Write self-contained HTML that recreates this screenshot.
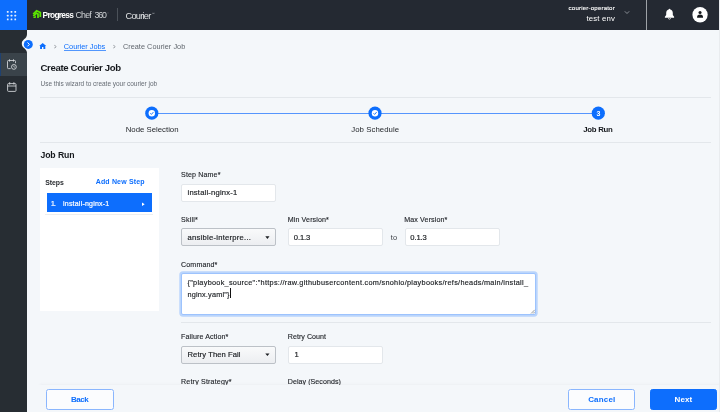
<!DOCTYPE html>
<html lang="en">
<head>
<meta charset="utf-8">
<title>Create Courier Job</title>
<style>
*{box-sizing:border-box;margin:0;padding:0}
html,body{width:720px;height:412px;overflow:hidden;background:#f4f7fa;font-family:"Liberation Sans",sans-serif;color:#1c1c1c}
#root{position:absolute;left:0;top:0;width:720px;height:412px;overflow:hidden;will-change:transform;background:#f4f7fa}
.abs{position:absolute}
#hdr{position:absolute;left:0;top:0;width:719px;height:30px;background:#242932}
#apps{position:absolute;left:0;top:0;width:27px;height:30px;background:#0d6efd}
#side{position:absolute;left:0;top:30px;width:27px;height:382px;background:#272d33}
#side .act{position:absolute;left:0;top:23px;width:27px;height:23px;background:#3a434a;border-left:1px solid #1f4170}
.t{position:absolute;white-space:nowrap;line-height:1}
.inp{position:absolute;background:#fff;border:1px solid #e3e7eb;border-radius:2px;height:18px;width:95px}
.sel{position:absolute;background:linear-gradient(#f9fafb,#eceef1);border:1px solid #bcc1c7;border-radius:2px;height:18px;width:95px}
.hr{position:absolute;height:1px;background:#e3e7eb}
.btn{position:absolute;appearance:none;-webkit-appearance:none;padding:0;margin:0;font:inherit;display:block;top:389px;width:67.3px;height:21px;border:1px solid #8ab6fe;border-radius:2.5px;background:#fbfcfe}
</style>
</head>
<body>
<div id="root">
<header id="hdr">
  <div id="apps">
    <svg class="abs" style="left:6px;top:11px" width="12" height="11" viewBox="0 0 12 11" fill="#e6efff"><g transform="translate(0.90 0.10) scale(1.0000 1.0000)"><rect x="0.00" y="0.00" width="1.7" height="1.7" rx="0.3"/><rect x="3.75" y="0.00" width="1.7" height="1.7" rx="0.3"/><rect x="7.50" y="0.00" width="1.7" height="1.7" rx="0.3"/><rect x="0.00" y="3.75" width="1.7" height="1.7" rx="0.3"/><rect x="3.75" y="3.75" width="1.7" height="1.7" rx="0.3"/><rect x="7.50" y="3.75" width="1.7" height="1.7" rx="0.3"/><rect x="0.00" y="7.50" width="1.7" height="1.7" rx="0.3"/><rect x="3.75" y="7.50" width="1.7" height="1.7" rx="0.3"/><rect x="7.50" y="7.50" width="1.7" height="1.7" rx="0.3"/></g></svg>
  </div>
  <!-- progress logo -->
  <svg class="abs" style="left:32px;top:9px" width="11" height="11" viewBox="0 0 11 11" fill="none" stroke="#5ce500" stroke-width="1.75" stroke-linejoin="miter"><g transform="translate(0.50 0.60) scale(1.0000 0.9574)"><path d="M0.7 4.7 L4.1 1.2 L7.8 3.1 L7.8 7.7"/><path d="M0.8 6.9 L3.9 3.7 L5.5 4.6 L5.5 8.8"/><path d="M0.4 8.9 L3.3 5.9 L3.3 8.9 Z" fill="#5ce500" stroke="none"/></g></svg>
  <div class="abs" style="left:117px;top:8px;width:1px;height:13px;background:#4b5159"></div>
  <svg class="abs" style="left:624px;top:10px" width="7" height="6" viewBox="0 0 7 6"><g transform="translate(0.00 0.50) scale(1.0000 1.0000)"><path d="M0.8 0.8 L3 3 L5.2 0.8" stroke="#9ca1a8" stroke-width="0.85" fill="none"/></g></svg>
  <div class="abs" style="left:646px;top:0;width:1px;height:30px;background:#9ea2a7"></div>
  <!-- bell -->
  <svg class="abs" style="left:664px;top:8px" width="12" height="14" viewBox="0 0 12 14"><g transform="translate(0.00 0.50) scale(1.0000 1.0000)"><path d="M5.5 0.3 C5 0.3 4.7 0.7 4.7 1.1 C3 1.5 2.2 2.9 2.2 4.5 L2.2 6.6 L0.9 8.3 L0.9 9.2 L10.1 9.2 L10.1 8.3 L8.8 6.6 L8.8 4.5 C8.8 2.9 8 1.5 6.3 1.1 C6.3 0.7 6 0.3 5.5 0.3 Z" fill="#fff"/><path d="M4.3 9.7 A1.25 1.25 0 0 0 6.7 9.7" fill="none" stroke="#fff" stroke-width="0.8"/></g></svg>
  <!-- avatar -->
  <svg class="abs" style="left:692px;top:7px" width="17" height="17" viewBox="0 0 17 17"><g transform="translate(0.30 0.00) scale(1.0000 1.0000)"><circle cx="7.75" cy="7.75" r="7.65" fill="#fff"/><circle cx="7.75" cy="5.45" r="1.55" fill="#15181c"/><path d="M4.8 10.7 L4.8 9.9 C4.8 8.2 6 7.4 7.75 7.4 C9.5 7.4 10.7 8.2 10.7 9.9 L10.7 10.7 Z" fill="#15181c"/></g></svg>
</header>
<nav id="side">
  <div class="act"></div>
  <svg class="abs" style="left:7px;top:29px" width="11" height="12" viewBox="0 0 11 12" fill="none" stroke="#d9dcdf" stroke-width="0.85"><g transform="translate(0.00 0.00) scale(1.0000 1.0000)"><path d="M3.6 9.6 L1.4 9.6 A0.9 0.9 0 0 1 0.5 8.7 L0.5 2.4 A0.9 0.9 0 0 1 1.4 1.5 L7.6 1.5 A0.9 0.9 0 0 1 8.5 2.4 L8.5 4.2"/><path d="M2.5 0.3 L2.5 2.6 M6.5 0.3 L6.5 2.6"/><circle cx="6.9" cy="7.9" r="2.4"/><path d="M6.9 6.7 L6.9 8 L7.7 8.4" stroke-width="0.7"/></g></svg>
  <svg class="abs" style="left:7px;top:52px" width="11" height="11" viewBox="0 0 11 11" fill="none" stroke="#d9dcdf" stroke-width="0.85"><g transform="translate(0.00 0.00) scale(1.0000 1.0000)"><rect x="0.6" y="1.6" width="8.4" height="7.8" rx="0.9"/><path d="M0.6 4 L9 4 M2.7 0.2 L2.7 2.6 M6.9 0.2 L6.9 2.6"/></g></svg>
</nav>
<!-- sidebar toggle notch + button -->
<svg class="abs" style="left:20px;top:34px" width="9" height="21" viewBox="0 0 9 21"><g transform="translate(0.00 0.00) scale(1.0000 1.0000)"><path d="M8 0.3 L7 0.3 C7 5.2 1.8 5 1.8 9.7 C1.8 14.4 7 14.2 7 19 L8 19 Z" fill="#f4f7fa"/></g></svg>
<svg class="abs" style="left:23px;top:39px" width="11" height="11" viewBox="0 0 11 11"><g transform="translate(0.80 0.90) scale(1.0000 1.0000)"><circle cx="4.5" cy="4.5" r="4.5" fill="#0d6efd"/><path d="M3.7 2.6 L5.6 4.5 L3.7 6.4" stroke="#fff" stroke-width="1" fill="none"/></g></svg>
<div class="abs" style="left:63.8px;top:49.6px;width:41.8px;height:0.7px;background:#0d6efd;opacity:0.7"></div>

<!-- breadcrumb home -->
<svg class="abs" style="left:39px;top:42px" width="9" height="9" viewBox="0 0 9 9"><g transform="translate(0.20 0.70) scale(1.0000 0.9697)"><path d="M3.5 0.2 L0 3.4 L0.9 3.4 L0.9 6.5 L2.8 6.5 L2.8 4.4 L4.2 4.4 L4.2 6.5 L6.1 6.5 L6.1 3.4 L7 3.4 Z" fill="#0d6efd"/></g></svg>

<div class="hr" style="left:40px;top:97.3px;width:671px"></div>

<!-- stepper -->
<div class="abs" style="left:152px;top:112.9px;width:446px;height:1px;background:#5595fd"></div>
<svg class="abs" style="left:145px;top:106px" width="15" height="15" viewBox="0 0 15 15"><g transform="translate(0.20 0.60) scale(1.0000 1.0000)"><circle cx="6.6" cy="6.6" r="6.6" fill="#0d6efd"/><circle cx="6.6" cy="6.6" r="3.2" fill="#fff"/><path d="M5.1 6.699999999999999 L6.199999999999999 7.8 L8.2 5.5" stroke="#0d6efd" stroke-width="0.95" fill="none"/></g></svg>
<svg class="abs" style="left:368px;top:106px" width="15" height="15" viewBox="0 0 15 15"><g transform="translate(0.40 0.60) scale(1.0000 1.0000)"><circle cx="6.6" cy="6.6" r="6.6" fill="#0d6efd"/><circle cx="6.6" cy="6.6" r="3.2" fill="#fff"/><path d="M5.1 6.699999999999999 L6.199999999999999 7.8 L8.2 5.5" stroke="#0d6efd" stroke-width="0.95" fill="none"/></g></svg>
<svg class="abs" style="left:591px;top:106px" width="15" height="15" viewBox="0 0 15 15"><g transform="translate(0.70 0.60) scale(1.0000 1.0000)"><circle cx="6.6" cy="6.6" r="6.6" fill="#0d6efd"/></g></svg>
<div class="hr" style="left:40px;top:142px;width:671px"></div>

<!-- steps panel -->
<div class="abs" style="left:40px;top:168px;width:118.5px;height:142.5px;background:#fff"></div>
<div class="abs" style="left:46.5px;top:193px;width:105.5px;height:19.3px;background:#0d6efd"></div>
<div class="abs" style="left:45px;top:214px;width:108px;height:1px;background:#eceef0"></div>
<svg class="abs" style="left:141px;top:202px" width="5" height="6" viewBox="0 0 5 6"><g transform="translate(0.80 0.20) scale(1.0000 1.0000)"><path d="M0.2 0.2 L2.9 2 L0.2 3.8 Z" fill="#fff"/></g></svg>

<!-- form controls -->
<div class="inp" style="left:181.3px;top:183.6px"></div>
<div class="sel" style="left:181.3px;top:228.4px"></div>
<svg class="abs" style="left:265px;top:236px" width="6" height="4" viewBox="0 0 6 4"><g transform="translate(0.10 0.00) scale(0.9200 0.8824)"><path d="M0.2 0.2 L4.8 0.2 L2.5 3.3 Z" fill="#1c1f23"/></g></svg>
<div class="inp" style="left:288px;top:228.4px"></div>
<div class="inp" style="left:404.5px;top:228.4px"></div>

<div class="abs" style="left:181px;top:273px;width:355px;height:41.5px;border:1px solid #9dc3fd;border-radius:2px;background:#fff;box-shadow:0 0 0 1.7px #bad5fc"></div>
<div class="abs" style="left:230.4px;top:288.3px;width:0.9px;height:9.4px;background:#111"></div>
<svg class="abs" style="left:530px;top:309px" width="7" height="6" viewBox="0 0 7 6"><g transform="translate(0.60 0.40) scale(0.8800 0.8800)"><path d="M0.5 4.7 L4.7 0.5 M2.8 4.7 L4.7 2.8" stroke="#6d7278" stroke-width="0.8"/></g></svg>
<div class="hr" style="left:181px;top:322px;width:530px"></div>

<div class="sel" style="left:181.3px;top:345.6px"></div>
<svg class="abs" style="left:265px;top:353px" width="6" height="5" viewBox="0 0 6 5"><g transform="translate(0.10 0.20) scale(0.9200 0.8824)"><path d="M0.2 0.2 L4.8 0.2 L2.5 3.3 Z" fill="#1c1f23"/></g></svg>
<div class="inp" style="left:288px;top:345.6px"></div>

<div class="t" style="left:42.60px;top:10px;line-height:10px;font-size:8.4px;color:#fff;letter-spacing:-0.722px;font-weight:bold;">Progress</div>
<div class="t" style="left:74.40px;top:12px;line-height:3px;font-size:2.4px;color:#8d9299;letter-spacing:0.000px;">®</div>
<div class="t" style="left:75.60px;top:10px;line-height:10px;font-size:8.8px;color:#d0d3d6;letter-spacing:-0.846px;">Chef</div>
<div class="t" style="left:92.40px;top:11px;line-height:3px;font-size:2.4px;color:#8d9299;letter-spacing:0.000px;">®</div>
<div class="t" style="left:94.40px;top:10px;line-height:10px;font-size:8.8px;color:#d0d3d6;letter-spacing:-1.092px;">360</div>
<div class="t" style="left:107.20px;top:12px;line-height:3px;font-size:2.4px;color:#8d9299;letter-spacing:0.000px;">®</div>
<div class="t" style="left:125.60px;top:11px;line-height:10px;font-size:9.2px;color:#dfe1e3;letter-spacing:-0.744px;">Courier</div>
<div class="t" style="left:151.60px;top:12px;line-height:4px;font-size:3.4px;color:#a9adb3;letter-spacing:0.000px;">™</div>
<div class="t" style="left:568.60px;top:4px;line-height:7px;font-size:6.1px;color:#fff;letter-spacing:0.185px;-webkit-text-stroke:0.12px #fff">courier-operator</div>
<div class="t" style="left:586.40px;top:14px;line-height:9px;font-size:7.8px;color:#fff;letter-spacing:0.171px;">test env</div>
<div class="t" style="left:53.70px;top:43px;line-height:7px;font-size:6.8px;color:#656b72;letter-spacing:0.000px;transform:scaleX(0.62);transform-origin:0 50%">&gt;</div>
<a href="#" class="t" style="left:63.80px;top:42px;line-height:9px;font-size:7.4px;color:#0d6efd;letter-spacing:-0.037px;text-decoration:none;">Courier Jobs</a>
<div class="t" style="left:112.60px;top:43px;line-height:7px;font-size:6.8px;color:#656b72;letter-spacing:0.000px;transform:scaleX(0.62);transform-origin:0 50%">&gt;</div>
<div class="t" style="left:122.90px;top:42px;line-height:9px;font-size:7.3px;color:#60666d;letter-spacing:0.042px;">Create Courier Job</div>
<h1 class="t" style="left:40.40px;top:62px;line-height:11px;font-size:9.6px;color:#15181c;letter-spacing:-0.330px;font-weight:bold;margin:0;">Create Courier Job</h1>
<div class="t" style="left:40.50px;top:80px;line-height:7px;font-size:6.5px;color:#666c74;letter-spacing:-0.028px;">Use this wizard to create your courier job</div>
<div class="t" style="left:125.70px;top:125px;line-height:9px;font-size:7.8px;color:#1f2226;letter-spacing:-0.003px;">Node Selection</div>
<div class="t" style="left:351.30px;top:125px;line-height:9px;font-size:7.8px;color:#1f2226;letter-spacing:0.044px;">Job Schedule</div>
<div class="t" style="left:583.20px;top:125px;line-height:9px;font-size:7.8px;color:#15181c;letter-spacing:-0.270px;font-weight:bold;">Job Run</div>
<div class="t" style="left:596.40px;top:110px;line-height:7px;font-size:7px;color:#fff;letter-spacing:0.000px;font-weight:bold;">3</div>
<h2 class="t" style="left:40.40px;top:150px;line-height:10px;font-size:8.7px;color:#15181c;letter-spacing:-0.090px;font-weight:bold;margin:0;">Job Run</h2>
<div class="t" style="left:45.20px;top:179px;line-height:7px;font-size:6.9px;color:#2a2d31;letter-spacing:-0.033px;font-weight:bold;">Steps</div>
<div class="t" style="left:95.70px;top:178px;line-height:7px;font-size:7.0px;color:#0d6efd;letter-spacing:0.165px;font-weight:bold;">Add New Step</div>
<div class="t" style="left:51.00px;top:200px;line-height:7px;font-size:6.8px;color:#fff;letter-spacing:-0.780px;-webkit-text-stroke:0.2px #fff">1.</div>
<div class="t" style="left:63.00px;top:200px;line-height:7px;font-size:7.0px;color:#fff;letter-spacing:0.215px;-webkit-text-stroke:0.2px #fff">install-nginx-1</div>
<label class="t" style="left:181.05px;top:171px;line-height:8px;font-size:7.1px;color:#22252a;letter-spacing:0.129px;-webkit-text-stroke:0.12px #22252a">Step Name*</label>
<div class="t" style="left:187.50px;top:188px;line-height:9px;font-size:7.6px;color:#1a1d21;letter-spacing:0.205px;-webkit-text-stroke:0.18px #1a1d21">install-nginx-1</div>
<label class="t" style="left:181.05px;top:216px;line-height:8px;font-size:7.1px;color:#22252a;letter-spacing:0.189px;-webkit-text-stroke:0.12px #22252a">Skill*</label>
<div class="t" style="left:187.50px;top:233px;line-height:9px;font-size:7.6px;color:#1a1d21;letter-spacing:0.263px;-webkit-text-stroke:0.18px #1a1d21">ansible-interpre...</div>
<label class="t" style="left:287.75px;top:216px;line-height:8px;font-size:7.1px;color:#22252a;letter-spacing:0.117px;-webkit-text-stroke:0.12px #22252a">Min Version*</label>
<div class="t" style="left:293.80px;top:233px;line-height:9px;font-size:7.6px;color:#1a1d21;letter-spacing:-0.092px;-webkit-text-stroke:0.18px #1a1d21">0.1.3</div>
<div class="t" style="left:390.70px;top:233px;line-height:9px;font-size:7.4px;color:#3a3f45;letter-spacing:0.347px;">to</div>
<label class="t" style="left:404.25px;top:216px;line-height:8px;font-size:7.1px;color:#22252a;letter-spacing:0.120px;-webkit-text-stroke:0.12px #22252a">Max Version*</label>
<div class="t" style="left:410.30px;top:233px;line-height:9px;font-size:7.6px;color:#1a1d21;letter-spacing:-0.092px;-webkit-text-stroke:0.18px #1a1d21">0.1.3</div>
<label class="t" style="left:181.05px;top:261px;line-height:8px;font-size:7.1px;color:#22252a;letter-spacing:0.118px;-webkit-text-stroke:0.12px #22252a">Command*</label>
<div class="t" style="left:187.50px;top:278px;line-height:9px;font-size:7.3px;color:#1a1d21;letter-spacing:0.286px;-webkit-text-stroke:0.15px #1a1d21">{"playbook_source":"https://raw.githubusercontent.com/snohio/playbooks/refs/heads/main/install_</div>
<div class="t" style="left:187.50px;top:290px;line-height:9px;font-size:7.3px;color:#1a1d21;letter-spacing:0.185px;-webkit-text-stroke:0.15px #1a1d21">nginx.yaml"}</div>
<label class="t" style="left:181.05px;top:333px;line-height:8px;font-size:7.1px;color:#22252a;letter-spacing:0.113px;-webkit-text-stroke:0.12px #22252a">Failure Action*</label>
<div class="t" style="left:187.50px;top:350px;line-height:9px;font-size:7.6px;color:#1a1d21;letter-spacing:0.091px;-webkit-text-stroke:0.18px #1a1d21">Retry Then Fail</div>
<label class="t" style="left:287.75px;top:333px;line-height:8px;font-size:7.1px;color:#22252a;letter-spacing:0.037px;-webkit-text-stroke:0.12px #22252a">Retry Count</label>
<div class="t" style="left:294.50px;top:350px;line-height:9px;font-size:7.6px;color:#1a1d21;letter-spacing:0.000px;-webkit-text-stroke:0.18px #1a1d21">1</div>
<label class="t" style="left:181.05px;top:378px;line-height:8px;font-size:7.1px;color:#22252a;letter-spacing:0.172px;-webkit-text-stroke:0.12px #22252a">Retry Strategy*</label>
<label class="t" style="left:287.75px;top:378px;line-height:8px;font-size:7.1px;color:#22252a;letter-spacing:0.048px;-webkit-text-stroke:0.12px #22252a">Delay (Seconds)</label>

<!-- footer -->
<div class="abs" style="left:40px;top:385px;width:680px;height:27px;background:#f4f7fa;box-shadow:0 -1.5px 3px rgba(60,70,80,0.06)"></div>
<div class="abs" style="left:27px;top:385px;width:13px;height:27px;background:#f4f7fa"></div>
<button type="button" class="btn" style="left:46.3px" aria-label="Back"></button>
<button type="button" class="btn" style="left:568px" aria-label="Cancel"></button>
<button type="button" class="btn" style="left:650px;background:#0d6efd;border-color:#0d6efd" aria-label="Next"></button>
<div class="t" style="left:71.00px;top:395px;line-height:9px;font-size:8.0px;color:#0d6efd;letter-spacing:-0.459px;font-weight:bold;">Back</div>
<div class="t" style="left:588.20px;top:395px;line-height:9px;font-size:8.0px;color:#0d6efd;letter-spacing:0.158px;font-weight:bold;">Cancel</div>
<div class="t" style="left:674.60px;top:395px;line-height:9px;font-size:8.0px;color:#fff;letter-spacing:0.075px;font-weight:bold;">Next</div>
<div class="abs" style="left:719px;top:0;width:1px;height:412px;background:#e9ecef"></div>
</div>
</body>
</html>
